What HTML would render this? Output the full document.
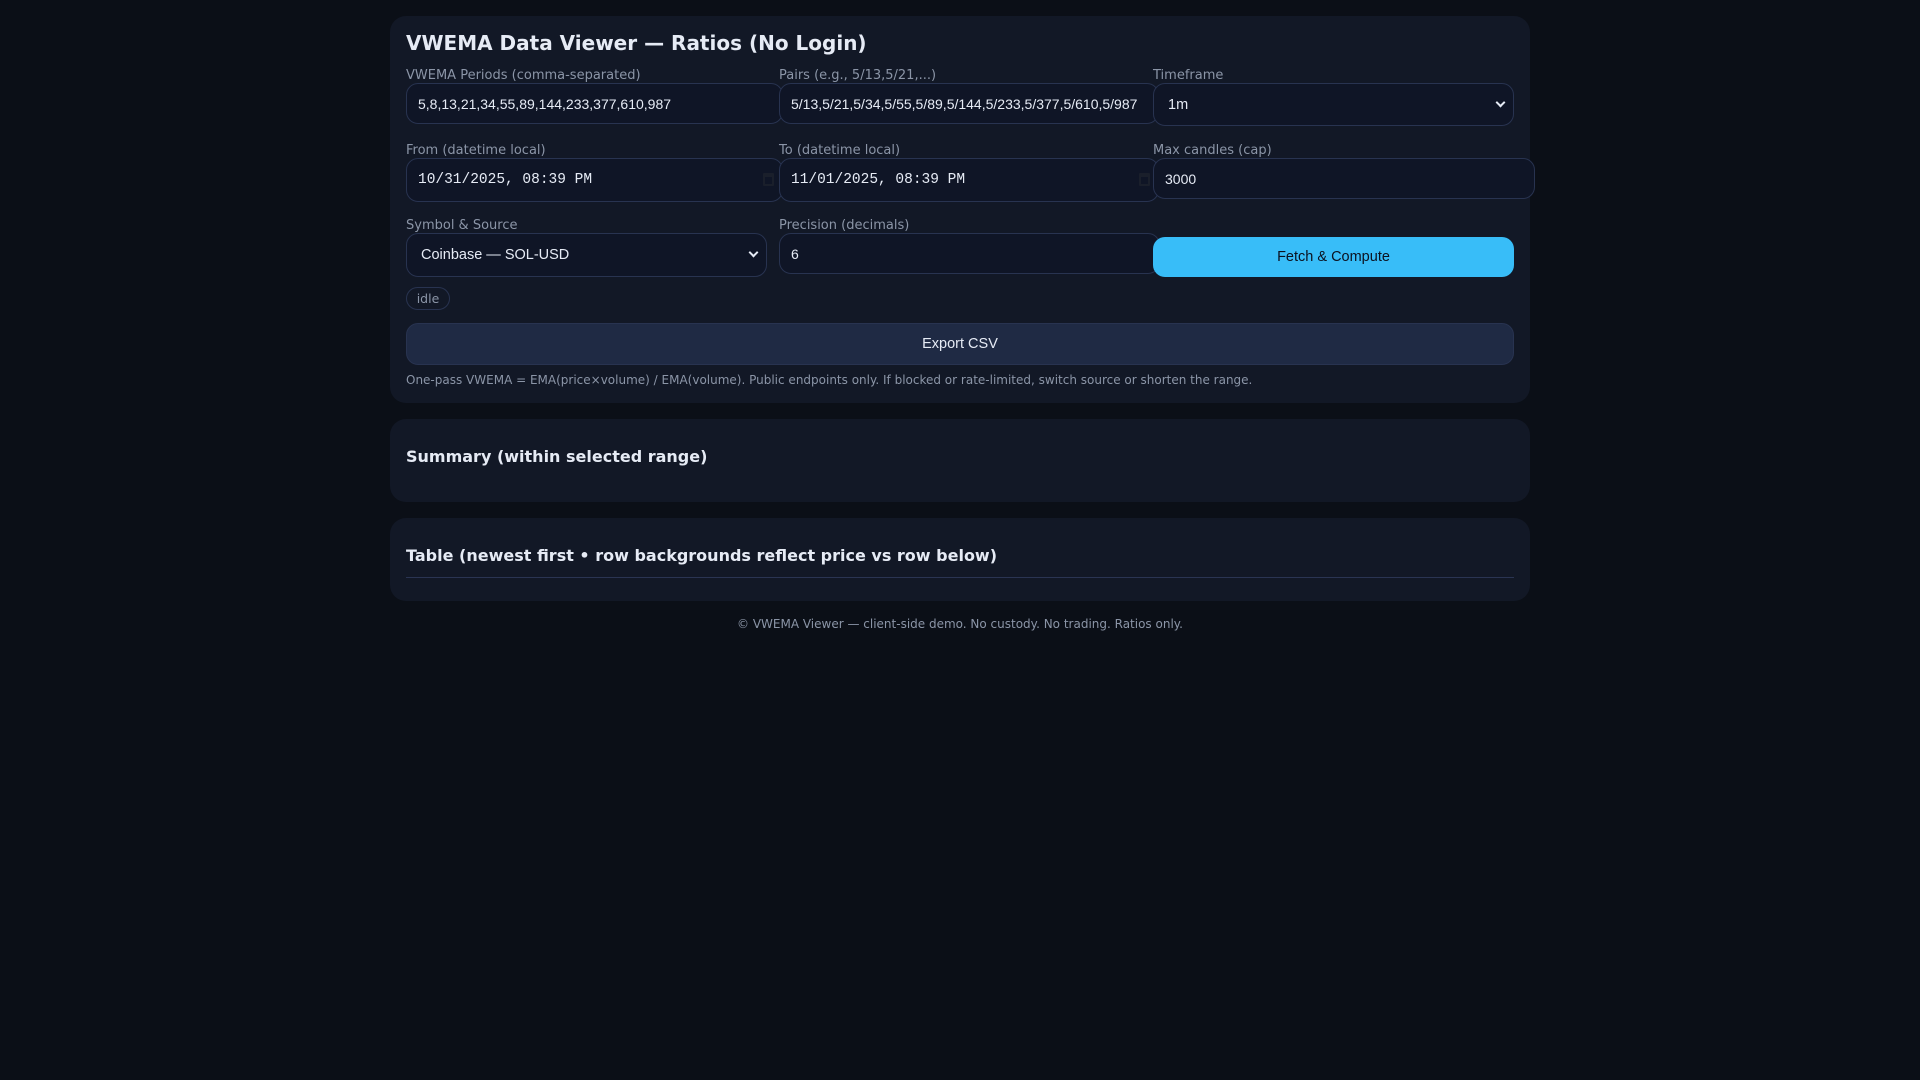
<!DOCTYPE html>
<html><head><meta charset="utf-8"><style>
*{box-sizing:border-box;margin:0;padding:0}
body{width:1920px;height:1080px;background:#0b0f17;font-family:"DejaVu Sans",sans-serif;position:relative;overflow:hidden}
.p{position:absolute;left:390px;width:1140px;background:#121826;border-radius:16px}
.a{position:absolute}
h1,h2{position:absolute;left:16px;color:#e6ebf5;font-weight:bold;white-space:nowrap}
h1{font-size:20px}
h2{font-size:16px}
.l{position:absolute;font-size:13px;color:#8b95a7;white-space:nowrap}
.i{position:absolute;background:#0f1526;border:1px solid #283350;border-radius:12px;color:#e6ebf5;font-family:"Liberation Sans",sans-serif;font-size:14px;display:flex;align-items:center;padding-left:11px;white-space:nowrap;overflow:hidden}
.m{font-family:"Liberation Mono",monospace;font-size:14.5px}
.cal{position:absolute;right:8px;top:50%;margin-top:-7px;width:11px;height:13px;border:2px solid #1a1f2b;border-top-width:4px;border-radius:1px}
.chev{position:absolute;right:9px;top:50%;margin-top:-6px;width:7px;height:7px;border-right:2px solid #e6ebf5;border-bottom:2px solid #e6ebf5;transform:rotate(45deg)}
</style></head><body>
<div class="p" style="top:16px;height:387px">
<h1 style="top:15px">VWEMA Data Viewer — Ratios (No Login)</h1>
<div class="l" style="left:16px;top:52px">VWEMA Periods (comma-separated)</div>
<div class="l" style="left:389px;top:52px">Pairs (e.g., 5/13,5/21,...)</div>
<div class="l" style="left:763px;top:52px">Timeframe</div>
<div class="i" style="left:16px;top:67px;width:377px;height:41px">5,8,13,21,34,55,89,144,233,377,610,987</div>
<div class="i" style="left:389px;top:67px;width:380px;height:41px">5/13,5/21,5/34,5/55,5/89,5/144,5/233,5/377,5/610,5/987</div>
<div class="i" style="left:763px;top:67px;width:361px;height:43px;padding-left:14px;font-size:14.5px">1m<span class="chev"></span></div>
<div class="l" style="left:16px;top:127px">From (datetime local)</div>
<div class="l" style="left:389px;top:127px">To (datetime local)</div>
<div class="l" style="left:763px;top:127px">Max candles (cap)</div>
<div class="i m" style="left:16px;top:142px;width:377px;height:44px">10/31/2025, 08:39 PM<span class="cal"></span></div>
<div class="i m" style="left:389px;top:142px;width:380px;height:44px">11/01/2025, 08:39 PM<span class="cal"></span></div>
<div class="i" style="left:763px;top:142px;width:382px;height:41px;font-size:14px">3000</div>
<div class="l" style="left:16px;top:202px">Symbol &amp; Source</div>
<div class="l" style="left:389px;top:202px">Precision (decimals)</div>
<div class="i" style="left:16px;top:217px;width:361px;height:44px;padding-left:14px;font-size:14.5px">Coinbase — SOL-USD<span class="chev"></span></div>
<div class="i" style="left:389px;top:217px;width:381px;height:41px">6</div>
<div class="a" style="left:763px;top:221px;width:361px;height:40px;background:#38bdf8;border-radius:12px;color:#0b1220;font-family:'Liberation Sans',sans-serif;font-size:14.5px;display:flex;align-items:center;justify-content:center">Fetch &amp; Compute</div>
<div class="a" style="left:16px;top:271px;width:44px;height:23px;border:1px solid #283350;border-radius:12px;color:#8b95a7;font-size:12.5px;display:flex;align-items:center;justify-content:center">idle</div>
<div class="a" style="left:16px;top:307px;width:1108px;height:42px;background:#1f2a44;border:1px solid #283350;border-radius:12px;color:#e6ebf5;font-family:'Liberation Sans',sans-serif;font-size:14.5px;display:flex;align-items:center;justify-content:center">Export CSV</div>
<div class="l" style="left:16px;top:357px;font-size:12px">One-pass VWEMA = EMA(price×volume) / EMA(volume). Public endpoints only. If blocked or rate-limited, switch source or shorten the range.</div>
</div>
<div class="p" style="top:419px;height:83px">
<h2 style="top:28px">Summary (within selected range)</h2>
</div>
<div class="p" style="top:518px;height:83px">
<h2 style="top:28px">Table (newest first • row backgrounds reflect price vs row below)</h2>
<div class="a" style="left:16px;top:59px;width:1108px;height:1px;background:#2a3452"></div>
</div>
<div class="l" style="left:0;width:1920px;text-align:center;top:617px;font-size:12px">© VWEMA Viewer — client-side demo. No custody. No trading. Ratios only.</div>
</body></html>
